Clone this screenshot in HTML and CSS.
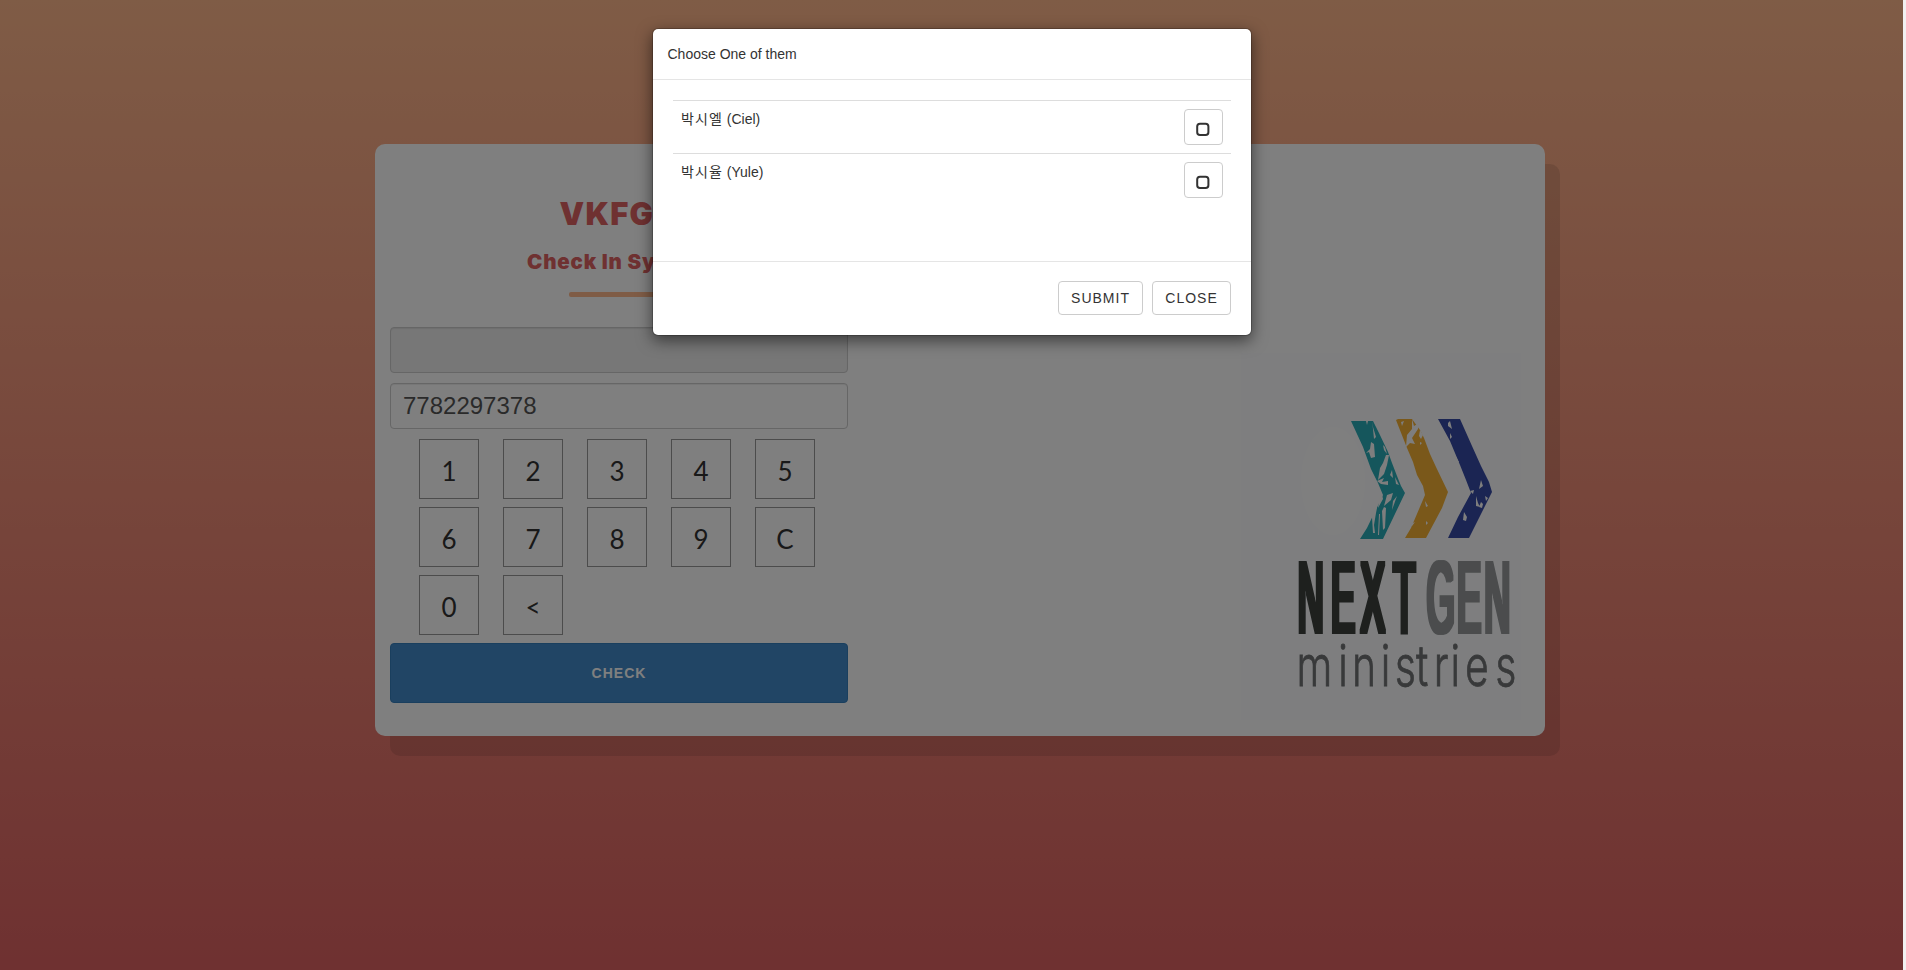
FILE: index.html
```html
<!DOCTYPE html>
<html lang="en">
<head>
<meta charset="utf-8">
<title>Check In System</title>
<link rel="stylesheet" href="styles.css">
</head>
<body>
<div class="page">
  <main class="card">
    <section class="checkin">
      <h1 class="title"><span>VKFGC</span></h1>
      <h2 class="subtitle"><span>Check In System</span></h2>
      <div class="divider"></div>
      <input class="field field-disabled" type="text" disabled>
      <input class="field" type="text" value="7782297378">
      <div class="keypad">
        <button class="key">1</button><button class="key">2</button><button class="key">3</button><button class="key">4</button><button class="key">5</button>
        <button class="key">6</button><button class="key">7</button><button class="key">8</button><button class="key">9</button><button class="key">C</button>
        <button class="key">0</button><button class="key">&lt;</button>
      </div>
      <button class="check">CHECK</button>
    </section>
    <svg class="logo" viewBox="1240 350 282 372" width="282" height="372">
      <defs>
        <filter id="heavy" x="-5%" y="-5%" width="110%" height="110%"><feMorphology operator="dilate" radius="2 2"/></filter>
      </defs>
      <rect class="logo-bg" x="1241" y="353" width="280" height="367"/>
      <ellipse class="logo-glow" cx="1333" cy="481" rx="32" ry="54"/>
      <path class="teal" d="M1351 421H1373L1376 427L1379 433L1388 452L1392 463L1397 476L1401 486L1405 493L1383 539L1360 539L1367 528L1383 495L1378 483L1371 469L1363 447Z"/>
      <path class="gold" d="M1396 420L1398 419H1412L1420 430L1424 438L1430 454L1436 467L1448 492L1442 508L1426 538H1405L1411 528L1425 495L1423 486L1417 475L1413 462L1407 448Z"/>
      <path class="navy" d="M1438 419H1460L1464 428L1472 446L1481 466L1489 482L1492 492L1483 510L1469 538H1448L1458 517L1471 493L1466 480L1460 465L1450 441Z"/>
      <g class="scratch">
        <path d="M1372 421L1373 427L1376 437L1374 439L1373 429ZM1366 421L1368 421L1367 425ZM1371 442L1374 444L1375 457L1371 458L1369 452L1366 453L1370 449ZM1383 445L1385 447L1387 454L1384 450ZM1386 455L1389 455L1387 465L1384 474L1378 480L1380 468L1383 463ZM1392 470L1393 478L1390 475ZM1377 481L1384 478L1382 482L1388 481L1388 485L1381 484ZM1395 477L1399 485L1396 484ZM1379 499L1382 494L1383 499L1378 508ZM1387 495L1393 493L1391 500L1384 506ZM1375 506L1378 503L1376 513L1374 525L1375 533L1373 533L1372 517L1368 519ZM1384 507L1386 508L1385 528L1383 530L1382 511ZM1393 501L1397 496L1392 510ZM1379 514L1380 514L1379 535L1378 535Z"/>
        <path d="M1412 419L1414 426L1419 423L1418 429L1412 438L1415 444L1410 443L1406 447L1407 435L1412 429ZM1401 422L1404 421L1402 426ZM1420 430L1423 435L1421 439L1419 436ZM1420 442L1422 443L1420 445ZM1425 501L1428 506L1426 507ZM1426 521L1428 523L1426 525ZM1411 524L1415 522L1412 526Z"/>
        <path d="M1448 423L1450 421L1452 429L1448 426ZM1450 433L1452 437L1450 439ZM1455 455L1459 462L1457 463ZM1481 480L1483 486L1479 489ZM1470 491L1474 490L1473 494ZM1476 496L1478 503L1480 507L1476 506ZM1485 496L1488 498L1486 501ZM1481 502L1483 504L1482 508L1479 507ZM1464 512L1467 517L1466 521L1463 520Z"/>
      </g>
      <g filter="url(#heavy)">
        <text class="wordmark next" transform="translate(1297 631.5) scale(.36 1)" x="2 94.4 177 267.5">NEXT</text>
        <text class="wordmark gen" transform="translate(1426 631.5) scale(.36 1)" x="2 86 162">GEN</text>
      </g>
      <text class="ministries" transform="translate(1296 686) scale(.72 1)" x=".7 58.8 77.8 117.8 137.2 166.7 191.4 214.6 234.7 276.8">ministries</text>
    </svg>
  </main>
</div>
<div class="backdrop">
  <div class="modal" role="dialog">
    <header class="modal-header">Choose One of them</header>
    <div class="modal-body">
      <div class="row"><span><span class="hangul">박시엘</span> (Ciel)</span>
        <button class="btn btn-box"><svg width="14" height="14" viewBox="0 0 14 14"><rect x="1.2" y="1.8" width="11.2" height="11.2" rx="2.8"/></svg></button></div>
      <div class="row"><span><span class="hangul">박시율</span> (Yule)</span>
        <button class="btn btn-box"><svg width="14" height="14" viewBox="0 0 14 14"><rect x="1.2" y="1.8" width="11.2" height="11.2" rx="2.8"/></svg></button></div>
    </div>
    <footer class="modal-footer">
      <button class="btn btn-submit">SUBMIT</button>
      <button class="btn btn-close">CLOSE</button>
    </footer>
  </div>
</div>
</body>
</html>
```
FILE: styles.css
```css
* { box-sizing: border-box; }

body {
  margin: 0;
  height: 970px;
  overflow: hidden;
  background: #f1f1f1;
  font: 14px/20px "Liberation Sans", "Noto Sans CJK KR", sans-serif;
  color: #333;
}

button, input { font-family: inherit; margin: 0; }

.page {
  width: 1903px;
  height: 970px;
  padding: 144px 358px 0 375px;
  background: linear-gradient(to bottom, #ffb88c, #de6262);
}

.card {
  display: flex;
  justify-content: space-between;
  width: 1170px;
  height: 592px;
  padding: 0 23px 0 15px;
  background: #fff;
  border-radius: 10px;
  box-shadow: 15px 20px 0 rgba(0, 0, 0, .1);
}

.checkin { width: 458px; padding-top: 50px; }

.title, .subtitle {
  margin: 0;
  text-align: center;
  font-family: Inter, sans-serif;
  font-weight: 900;
  color: #de6262;
  white-space: nowrap;
}
.title { font-size: 31px; line-height: 40px; letter-spacing: 1.2px; }
.subtitle { font-size: 20.5px; line-height: 30px; margin-top: 13px; letter-spacing: .8px; }

.divider {
  width: 100px;
  height: 5px;
  margin: 15px auto 30px;
  border-radius: 2px;
  background: #ffb88c;
}

.field {
  display: block;
  width: 458px;
  height: 46px;
  margin-bottom: 10px;
  padding: 6px 12px;
  border: 1px solid #ccc;
  border-radius: 4px;
  background: #fff;
  box-shadow: inset 0 1px 1px rgba(0, 0, 0, .075);
  color: #555;
  font-size: 24px;
}
.field-disabled { background: #eee; }

.keypad {
  display: grid;
  grid-template-columns: repeat(5, 60px);
  gap: 8px 24px;
  margin: 0 0 8px 29px;
}
.key {
  height: 60px;
  padding: 4px 0 0;
  border: 1px solid #999;
  background: #fff;
  color: #333;
  font: 26px/50px Lato, sans-serif;
}

.check {
  display: block;
  width: 458px;
  height: 60px;
  padding: 0;
  border: 1px solid #357ebd;
  border-radius: 4px;
  background: #428bca;
  color: #fff;
  font: bold 14px/20px "Liberation Sans", sans-serif;
  letter-spacing: 1px;
}

.logo { margin-top: 206px; }
.logo-bg { fill: #fcfdfe; }
.logo-glow { fill: #fff; }
.teal { fill: #2aacb8; }
.gold { fill: #f5b135; }
.navy { fill: #364aa6; }
.scratch { fill: #fdfdfd; }
.wordmark { font: 100px "Liberation Sans", sans-serif; }
.next { fill: #3c403e; }
.gen { fill: #96999b; }
.ministries { font: 300 57px Inter, sans-serif; fill: #707274; stroke: #707274; stroke-width: .8px; }

.backdrop {
  position: absolute;
  top: 0;
  left: 0;
  width: 1903px;
  height: 970px;
  padding: 28px 0 0 652px;
  background: rgba(0, 0, 0, .5);
}

.modal {
  width: 600px;
  height: 308px;
  border: 1px solid rgba(0, 0, 0, .2);
  border-radius: 6px;
  background: #fff;
  background-clip: padding-box;
  box-shadow: 0 5px 15px rgba(0, 0, 0, .5);
}
.modal-header { height: 51px; padding: 15px 14.5px; border-bottom: 1px solid #e5e5e5; }
.modal-body { height: 181px; padding: 20px; }
.row {
  display: flex;
  justify-content: space-between;
  align-items: flex-start;
  height: 53px;
  padding: 8px;
  border-top: 1px solid #ddd;
}
.hangul { letter-spacing: 1.1px; }
.modal-footer {
  display: flex;
  justify-content: flex-end;
  gap: 9px;
  padding: 19px 20px;
  border-top: 1px solid #e5e5e5;
}

.btn {
  height: 34px;
  padding: 0;
  border: 1px solid #ccc;
  border-radius: 4px;
  background: #fff;
  color: #333;
  font-size: 14px;
  line-height: 20px;
  letter-spacing: 1px;
}
.btn-submit { width: 85px; }
.btn-close { width: 79px; }
.btn-box { width: 39px; height: 36px; padding: 4px 1px 0 0; }
.btn-box svg { display: block; margin: 0 auto; }
.btn-box rect { fill: none; stroke: #333; stroke-width: 2; }
```
